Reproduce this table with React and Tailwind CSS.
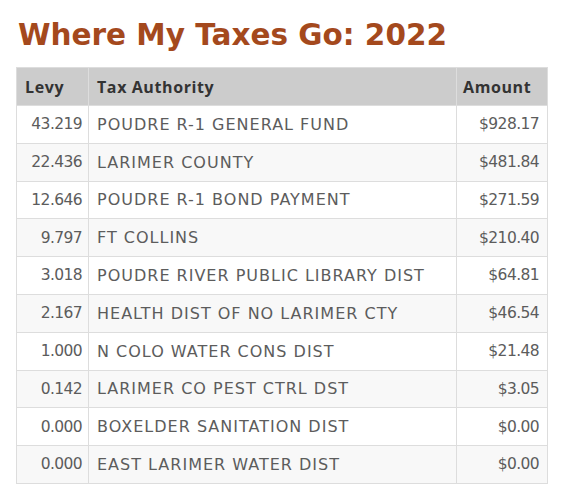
import React from "react";

const rows = [
  ["43.219", "POUDRE R-1 GENERAL FUND", "$928.17"],
  ["22.436", "LARIMER COUNTY", "$481.84"],
  ["12.646", "POUDRE R-1 BOND PAYMENT", "$271.59"],
  ["9.797", "FT COLLINS", "$210.40"],
  ["3.018", "POUDRE RIVER PUBLIC LIBRARY DIST", "$64.81"],
  ["2.167", "HEALTH DIST OF NO LARIMER CTY", "$46.54"],
  ["1.000", "N COLO WATER CONS DIST", "$21.48"],
  ["0.142", "LARIMER CO PEST CTRL DST", "$3.05"],
  ["0.000", "BOXELDER SANITATION DIST", "$0.00"],
  ["0.000", "EAST LARIMER WATER DIST", "$0.00"],
];

const App = () => {
  return (
    <div className="bg-white min-h-[502px] pl-4 pt-[15px] font-['Open_Sans',sans-serif] text-[#444]">
      <h1 className="pl-[2px] font-['DejaVu_Sans',sans-serif] text-[29.5px] leading-[40px] font-bold text-[#a4491d]">
        Where My Taxes Go: 2022
      </h1>
      <table className="mt-[12px] w-[531px] border-collapse table-fixed text-[16px]">
        <colgroup>
          <col className="w-[72px]" />
          <col className="w-[368px]" />
          <col className="w-[91px]" />
        </colgroup>
        <thead>
          <tr className="bg-[#cccccc] h-[38px]">
            <th className="border border-[#dddddd] px-2 text-left font-bold tracking-[0.6px] text-[#333]">
              Levy
            </th>
            <th className="border border-[#dddddd] px-2 text-left font-bold tracking-[0.6px] text-[#333]">
              Tax Authority
            </th>
            <th className="border border-[#dddddd] px-[6px] text-left font-bold tracking-[0.6px] text-[#333]">
              Amount
            </th>
          </tr>
        </thead>
        <tbody className="font-['DejaVu_Sans',sans-serif] font-normal text-[#5c5c5c]">
          {rows.map((row, i) => (
            <tr
              key={i}
              className={(i % 2 === 1 ? "bg-[#f8f8f8]" : "bg-white") + " h-[37.8px]"}
            >
              <td className="border border-[#dddddd] pl-2 pr-[6px] pt-[1px] text-right text-[15.5px] tracking-[-0.6px]">
                {row[0]}
              </td>
              <td className="border border-[#dddddd] px-2 pt-[1px] text-left tracking-[1px]">
                {row[1]}
              </td>
              <td className="border border-[#dddddd] px-2 pt-[1px] text-right text-[15.5px] tracking-[-0.6px]">
                {row[2]}
              </td>
            </tr>
          ))}
        </tbody>
      </table>
    </div>
  );
};

export default App;
